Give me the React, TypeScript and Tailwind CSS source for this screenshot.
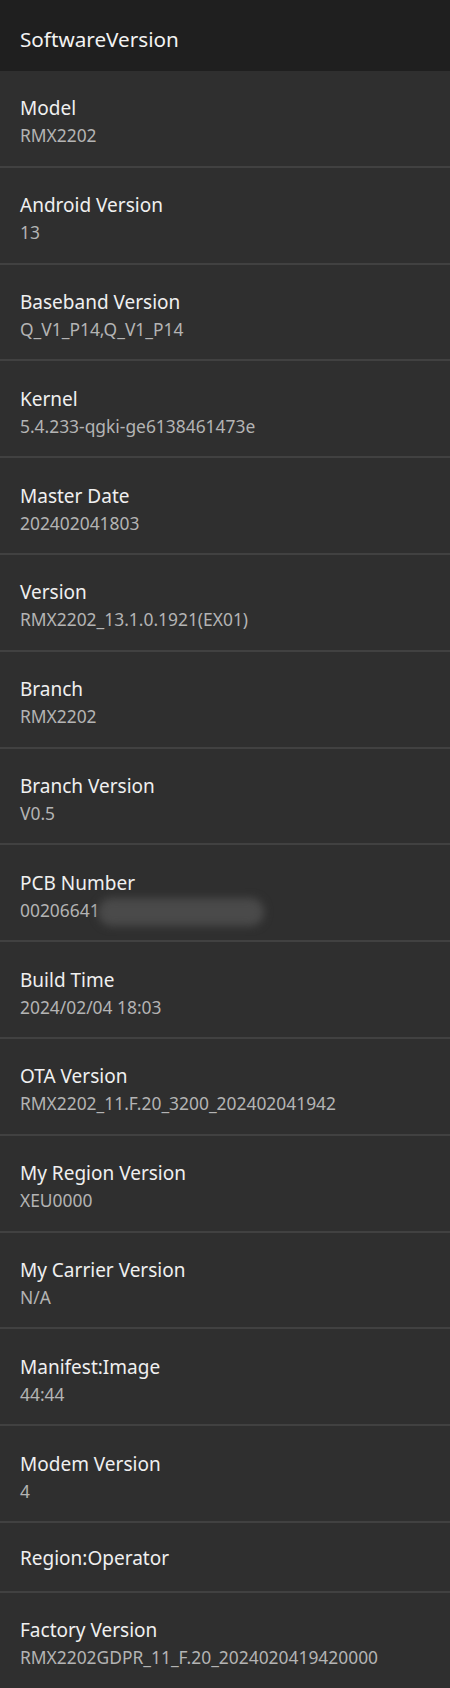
const rows: { label: string; value?: string; masked?: boolean }[] = [
  { label: "Model", value: "RMX2202" },
  { label: "Android Version", value: "13" },
  { label: "Baseband Version", value: "Q_V1_P14,Q_V1_P14" },
  { label: "Kernel", value: "5.4.233-qgki-ge6138461473e" },
  { label: "Master Date", value: "202402041803" },
  { label: "Version", value: "RMX2202_13.1.0.1921(EX01)" },
  { label: "Branch", value: "RMX2202" },
  { label: "Branch Version", value: "V0.5" },
  { label: "PCB Number", value: "00206641", masked: true },
  { label: "Build Time", value: "2024/02/04 18:03" },
  { label: "OTA Version", value: "RMX2202_11.F.20_3200_202402041942" },
  { label: "My Region Version", value: "XEU0000" },
  { label: "My Carrier Version", value: "N/A" },
  { label: "Manifest:Image", value: "44:44" },
  { label: "Modem Version", value: "4" },
  { label: "Region:Operator" },
];

export default function App() {
  return (
    <main
      className="w-[450px] h-[1688px] overflow-hidden bg-[#2f2f2f]"
      style={{ fontFamily: '"Noto Sans", Roboto, sans-serif' }}
    >
      <header className="flex h-[71px] items-center bg-[#1f1f1f] px-5 pt-2">
        <h1 className="text-[20.7px] text-[#f2f2f2]">SoftwareVersion</h1>
      </header>

      {rows.map((row) => (
        <div
          key={row.label}
          className={`flex flex-col justify-center border-b-2 border-[#414141] px-5 ${
            row.value ? "h-[96.8px] pt-2" : "h-[70px] pt-1"
          }`}
        >
          <p className="text-[19px] leading-[27px] text-[#f0f0f0]">{row.label}</p>
          {row.value && (
            <div className="relative flex items-center">
              <p className="text-[17.4px] leading-[27px] text-[#b4b4b4]">{row.value}</p>
              {row.masked && (
                <div className="absolute left-[78px] top-[1px] h-[28px] w-[166px] rounded-full bg-[#4a4a4a] blur-[4px]" />
              )}
            </div>
          )}
        </div>
      ))}

      <div className="flex h-[95px] flex-col justify-center px-5 pt-2">
        <p className="text-[19px] leading-[27px] text-[#f0f0f0]">Factory Version</p>
        <p className="text-[17.4px] leading-[27px] text-[#b4b4b4]">
          RMX2202GDPR_11_F.20_2024020419420000
        </p>
      </div>
    </main>
  );
}
